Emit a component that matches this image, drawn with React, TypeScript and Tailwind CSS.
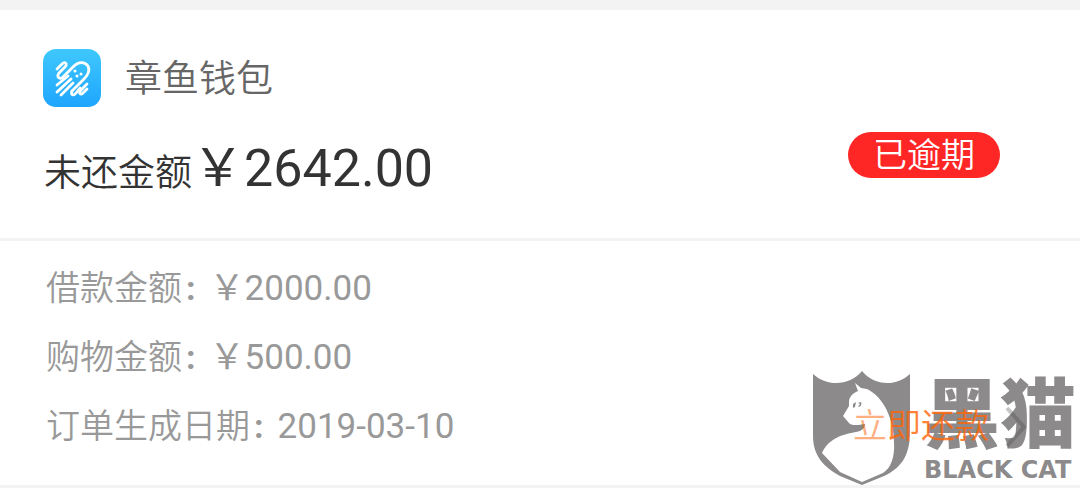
import React from 'react';

const YUAN = '\uFFE5';

const details = [
  { label: '借款金额', currency: YUAN, value: '2000.00' },
  { label: '购物金额', currency: YUAN, value: '500.00' },
  { label: '订单生成日期', value: '2019-03-10' },
];

const WalletLogo: React.FC = () => (
  <svg className="size-[58px] shrink-0" viewBox="0 0 58 58" fill="none" aria-hidden="true">
    <defs>
      <linearGradient id="wallet" x1="0" y1="0" x2="0" y2="1">
        <stop offset="0" stopColor="#3fc8fd" />
        <stop offset="1" stopColor="#1fa5fd" />
      </linearGradient>
    </defs>
    <rect width="58" height="58" rx="13" fill="url(#wallet)" />
    <g stroke="#fff" strokeWidth="2.8" strokeLinecap="round" strokeLinejoin="round">
      <path d="M14 20L19 15C22 12 25 15 22 18L16 24C13 28 17 31 20 28L31 17C36 12 42 13 45 17C47 21 45 26 41 30L29 42" />
      <path d="M14 36L25 27M14 43L28 30M18 46L30 34" />
      <path d="M29 42C27 46 31 47 33 44L37 39M44 35L38 41C35 45 38 46 40 44L44 40" />
    </g>
    <circle cx="32" cy="22" r="1.5" fill="#fff" />
    <circle cx="34" cy="27" r="1.5" fill="#fff" />
    <circle cx="38" cy="25" r="1.5" fill="#fff" />
  </svg>
);

const CatShield: React.FC = () => (
  <svg className="h-[116px] w-[100px] shrink-0" viewBox="0 0 100 116" aria-hidden="true">
    <path
      fill="currentColor"
      d="M1 4C15 17 38 16 50 1C62 16 84 17 98 4V62C98 88 87 99 72 106L50 115L28 106C12 97 1 86 1 66Z"
    />
    <path
      fill="#fff"
      d="M43 13L49 18L55 19C72 27 82 50 82 72C83 87 79 98 71 103L50 112L28 102L10 83C16 69 31 64 44 62C50 61 53 58 53 54C47 55 39 56 37 53L31 46L37 36L37 31C38 25 42 23 46 21Z"
    />
    <path fill="currentColor" d="M41 34l3-2-1 5-2 1zM46 33l3-1c1 2 0 5-3 5l2-3z" />
  </svg>
);

const Watermark: React.FC = () => (
  <div className="pointer-events-none absolute right-0 -bottom-px flex items-start gap-3 text-[#8c8a8b]" aria-hidden="true">
    <CatShield />
    <div className="pt-2 pr-1 whitespace-nowrap">
      <div className="text-[76px] leading-[76px] font-black">黑猫</div>
      <div className="font-['DejaVu_Sans'] text-[24px] leading-[32px] font-bold">BLACK CAT</div>
    </div>
  </div>
);

const App: React.FC = () => (
  <main className="relative border-t-10 border-[#f3f3f3] bg-white font-[Roboto,'Noto_Sans_CJK_SC',sans-serif]">
    <section className="border-b-3 border-[#f3f3f3] px-11 pt-9 pb-7">
      <header className="-ml-px flex h-16 items-center gap-6">
        <WalletLogo />
        <h1 className="pt-1 text-[37px] leading-[48px] font-[350] text-[#666]">章鱼钱包</h1>
      </header>
      <div className="flex items-center justify-between pt-[22px] pr-9">
        <p className="flex items-baseline leading-[72px] text-[#333]">
          <span className="text-[37px] font-[350]">未还金额</span>
          <span className="text-[52px]">{YUAN}2642.00</span>
        </p>
        <span className="mb-8 rounded-full bg-[#ff2626] px-[25px] text-[34px] leading-[46px] font-[350] text-white">
          已逾期
        </span>
      </div>
    </section>
    <section className="relative border-b-3 border-[#f3f3f3] px-[46px] pt-[13px] pb-6">
      <Watermark />
      <dl className="text-[35px] leading-[69px] text-[#999]">
        {details.map((item) => (
          <div key={item.label} className="flex items-baseline">
            <dt className="text-[34px] font-[350]">
              {item.label}
              <span className="mr-[14px] ml-1 font-bold">:</span>
            </dt>
            <dd>
              {item.currency}
              {item.value}
            </dd>
          </div>
        ))}
      </dl>
      <button
        type="button"
        className="absolute right-[53px] bottom-6 flex items-center gap-4 text-[34px] leading-[69px] font-[350] text-[#ff6405]"
      >
        <span>
          <span className="opacity-50">立</span>
          <span className="opacity-80">即还款</span>
        </span>
        <svg className="h-[42px] w-[22px] opacity-30" viewBox="0 0 22 42" fill="none" stroke="#444" strokeWidth="4" aria-hidden="true">
          <path d="M2 2L19 21L2 40" />
        </svg>
      </button>
    </section>
  </main>
);

export default App;
